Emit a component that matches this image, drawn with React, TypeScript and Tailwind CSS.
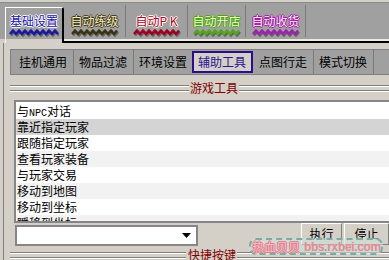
import React from "react";

const zigPoints = (w: number) => {
  const pts: string[] = [];
  for (let x = 0, i = 0; x <= w; x += 3, i++) pts.push(`${x},${i % 2 ? 1.5 : 5}`);
  return pts.join(" ");
};

function Zig({ color, w = 48 }: { color: string; w?: number }) {
  const pts = zigPoints(w);
  return (
    <svg width={w + 2} height="8" viewBox={`-1 0 ${w + 2} 8`} className="block">
      <polyline points={pts} fill="none" stroke="#303030" strokeOpacity="0.55" strokeWidth="2.6" strokeLinejoin="round" transform="translate(1,1.5)" />
      <polyline points={pts} fill="none" stroke={color} strokeWidth="2.6" strokeLinejoin="round" />
    </svg>
  );
}

const topTabs = [
  { label: "自动练级", w: "w-[62px]", cls: "text-[#f4ecc4] [text-shadow:1px_0_#3c3410,-1px_0_#3c3410,0_1px_#3c3410,0_-1px_#3c3410]", zig: "#3c3410" },
  { label: "自动P K", w: "w-[62px]", cls: "text-[#b00018] [text-shadow:1px_0_#fff,-1px_0_#fff,0_1px_#fff,0_-1px_#fff]", zig: "#a00020" },
  { label: "自动开店", w: "w-[58px]", cls: "text-[#e8ffc8] [text-shadow:1px_0_#50a010,-1px_0_#50a010,0_1px_#50a010,0_-1px_#50a010]", zig: "#50a818" },
  { label: "自动收货", w: "w-[60px]", cls: "text-[#ffeefc] [text-shadow:1px_0_#a010a0,-1px_0_#a010a0,0_1px_#a010a0,0_-1px_#a010a0]", zig: "#a020b0" },
];

const subTabs = ["挂机通用", "物品过滤", "环境设置", "辅助工具", "点图行走", "模式切换"];

const rows = [
  { t: <>与<span className="font-['Liberation_Mono',monospace] text-[10px]">NPC</span>对话</>, bg: "bg-white" },
  { t: "靠近指定玩家", bg: "bg-[#d4d4d4]" },
  { t: "跟随指定玩家", bg: "bg-white" },
  { t: "查看玩家装备", bg: "bg-[#f2f2f2]" },
  { t: "与玩家交易", bg: "bg-white" },
  { t: "移动到地图", bg: "bg-[#f2f2f2]" },
  { t: "移动到坐标", bg: "bg-white" },
  { t: "瞬移到坐标", bg: "bg-[#f2f2f2]" },
];

function Etched({ className }: { className: string }) {
  return (
    <div className={`flex flex-col ${className}`}>
      <div className="h-px bg-[#808080]" />
      <div className="h-px bg-white" />
      <div className="h-[3px]" />
      <div className="h-px bg-[#808080]" />
      <div className="h-px bg-white" />
    </div>
  );
}

export default function App() {
  return (
    <div className="relative w-[389px] h-[260px] overflow-hidden bg-[#d4d0c8] flex flex-col text-[12px] leading-[12px] font-['Noto_Sans_CJK_SC','Liberation_Sans',sans-serif] text-black">
      {/* top tab strip */}
      <div className="h-[2px] bg-[#d4d0c8] shrink-0" />
      <div className="flex h-[41px] shrink-0 bg-[#a0a0a0] border-t border-[#8c8c8c]">
        <div className="w-[5px] flex flex-col">
          <div className="flex-1" />
          <div className="h-[4px] bg-[#d4d0c8]" />
        </div>
        <div className="mt-[4px] w-[59px] flex flex-col border-l border-t border-white border-r-2 border-r-black rounded-tr-[2px]">
          <div className="h-[31px] flex flex-col items-center pt-[7px]">
            <span className="text-[#1a14a8] [text-shadow:1px_0_#fff,-1px_0_#fff,0_1px_#fff,0_-1px_#fff]">基础设置</span>
            <div className="mt-[2px]"><Zig color="#1a1aa0" /></div>
          </div>
          <div className="h-[4px] bg-[#d4d0c8]" />
        </div>
        <div className="flex-1 flex flex-col">
          <div className="flex-1 flex">
            {topTabs.map((t) => (
              <div key={t.label} className={`${t.w} flex flex-col items-center pt-[12px] border-r border-[#7a7a7a] my-[2px]`}>
                <span className={`-mt-[2px] ${t.cls}`}>{t.label}</span>
                <div className="mt-[2px]"><Zig color={t.zig} w={46} /></div>
              </div>
            ))}
          </div>
          <div className="h-[2px] bg-[#ece9e3]" />
          <div className="h-[2px] bg-black" />
        </div>
      </div>

      {/* panel */}
      <div className="flex-1 ml-[3px] border-l border-[#808080] flex flex-col">
        <div className="mt-[6px] ml-[6px] w-[400px] h-[26px] border border-[#808080] bg-[#a0a0a0] flex pl-[3px]">
          {subTabs.map((s, i) =>
            i === 3 ? (
              <div key={s} className="w-[62px] flex items-center">
                <div className="w-[61px] h-[22px] border-2 border-[#2a0c8c] bg-[#d4d0c8] flex items-center pl-[4px] text-[#2a1490]">{s}</div>
              </div>
            ) : (
              <div key={s} className={`${i === 2 ? "w-[58px]" : "w-[60px] border-r border-[#7a7a7a]"} flex items-center pl-[5px]`}>{s}</div>
            )
          )}
        </div>

        <div className="mt-[5px] h-[16px] flex items-center">
          <Etched className="ml-[6px] w-[179px]" />
          <span className="ml-px text-[#800000]">游戏工具</span>
          <Etched className="ml-px flex-1" />
        </div>

        <div className="mt-[4px] ml-[10px] w-[390px] h-[123px] border-2 border-[#868686] border-r-0 bg-white overflow-hidden pt-px">
          {rows.map((r, i) => (
            <div key={i} className={`${r.bg} h-[16px] leading-[16px] pl-px`}>{r.t}</div>
          ))}
        </div>

        <div className="h-[24px] flex items-start">
          <div className="mt-[2px] ml-[11px] w-[201px] h-[21px] border-2 border-[#868686] bg-white flex items-center justify-end pr-[5px]">
            <svg width="9" height="5" viewBox="0 0 9 5"><polygon points="0,0 9,0 4.5,5" fill="#000" /></svg>
          </div>
          <button className="ml-[103px] w-[45px] h-[22px] bg-[#d4d0c8] border border-t-white border-l-white border-r-[#808080] border-b-[#808080] flex items-center justify-center">执行</button>
          <button className="ml-[2px] w-[45px] h-[22px] shrink-0 bg-[#d4d0c8] border border-t-white border-l-white border-r-[#808080] border-b-[#808080] flex items-center justify-center">停止</button>
        </div>

        <div className="h-[16px] flex items-center">
          <Etched className="ml-[6px] w-[176px]" />
          <span className="ml-[2px] text-[#800000]">快捷按键</span>
          <Etched className="ml-px flex-1" />
        </div>
      </div>

      {/* watermark */}
      <div className="absolute left-[249px] top-[238px] w-[134px] h-[17px] rounded-[7px] border-2 border-dashed border-[#7aaca4] bg-[#cfe0da]/60 flex items-center pl-[1px] gap-[4px] whitespace-nowrap font-bold">
        <span className="shrink-0 text-[#f6c0c6] [text-shadow:1px_0_#e07888,-1px_0_#e07888,0_1px_#e07888,0_-1px_#e07888] font-normal">热血贝贝</span>
        <span className="shrink-0 text-[#e48a94] font-['Liberation_Sans',sans-serif] text-[12px] tracking-[-0.35px]">bbs.rxbei.com</span>
      </div>
    </div>
  );
}
